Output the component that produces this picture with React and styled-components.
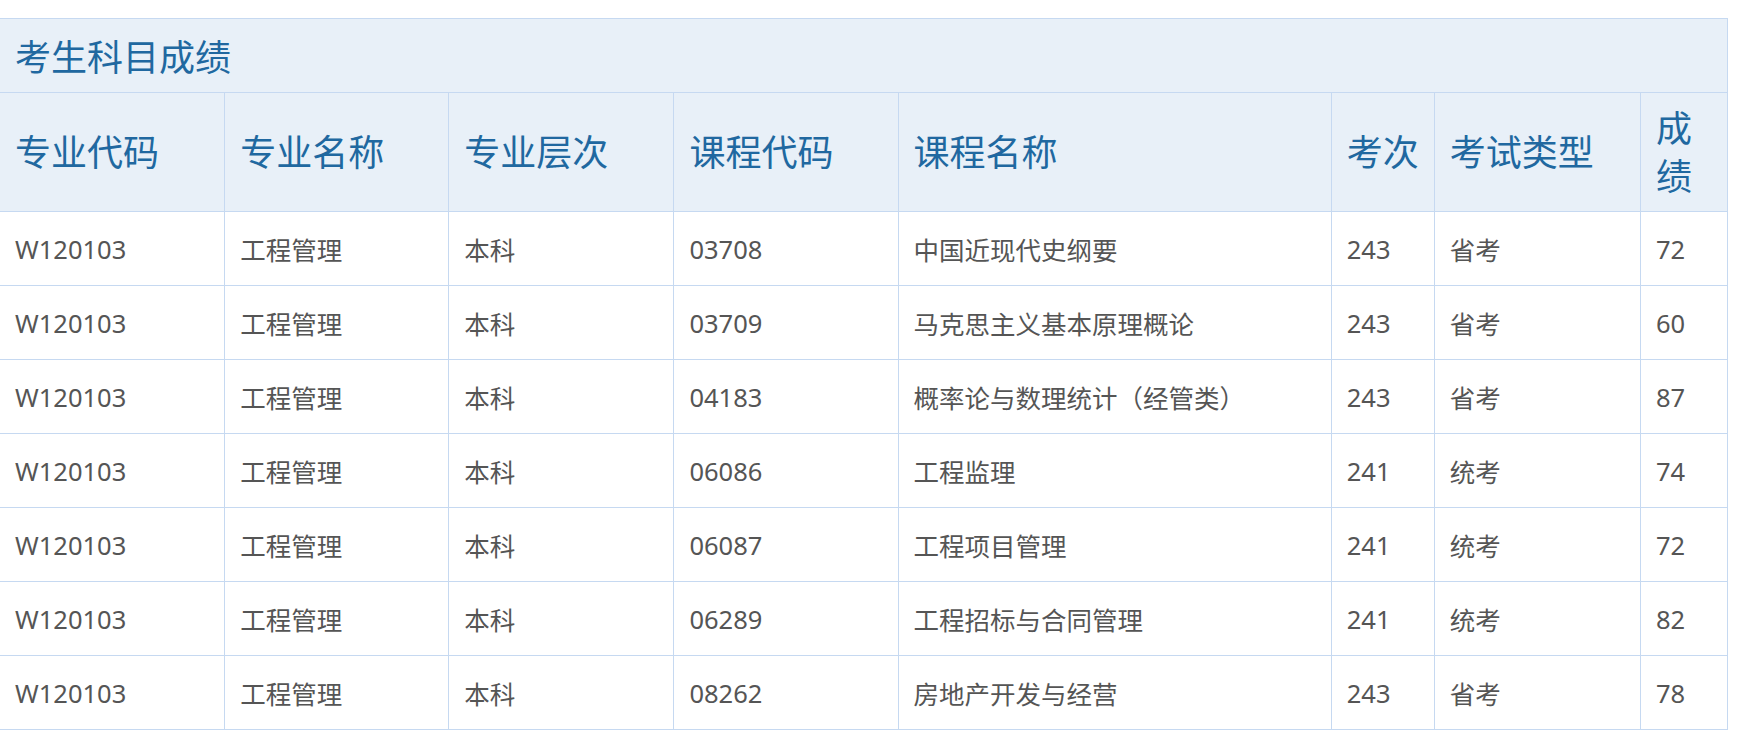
import React from 'react'
import styled, { createGlobalStyle } from 'styled-components'

const GlobalStyle = createGlobalStyle`
  html, body {
    margin: 0;
    padding: 0;
    background: #fff;
    overflow: hidden;
  }
  body {
    font-family: "Noto Sans", "Noto Sans CJK SC", sans-serif;
  }
`

const columns = [
  { title: '专业代码', width: 225 },
  { title: '专业名称', width: 224 },
  { title: '专业层次', width: 225 },
  { title: '课程代码', width: 224 },
  { title: '课程名称', width: 433 },
  { title: '考次', width: 103 },
  { title: '考试类型', width: 206 },
  { title: '成绩', width: 87 },
]

const rows = [
  ['W120103', '工程管理', '本科', '03708', '中国近现代史纲要', '243', '省考', '72'],
  ['W120103', '工程管理', '本科', '03709', '马克思主义基本原理概论', '243', '省考', '60'],
  ['W120103', '工程管理', '本科', '04183', '概率论与数理统计（经管类）', '243', '省考', '87'],
  ['W120103', '工程管理', '本科', '06086', '工程监理', '241', '统考', '74'],
  ['W120103', '工程管理', '本科', '06087', '工程项目管理', '241', '统考', '72'],
  ['W120103', '工程管理', '本科', '06289', '工程招标与合同管理', '241', '统考', '82'],
  ['W120103', '工程管理', '本科', '08262', '房地产开发与经营', '243', '省考', '78'],
]

const App = () => {
  return (
    <Page>
      <GlobalStyle />
      <ScoreTable>
        <colgroup>
          {columns.map((c) => (
            <col key={c.title} style={{ width: c.width }} />
          ))}
        </colgroup>
        <thead>
          <tr>
            <Caption colSpan={columns.length}>考生科目成绩</Caption>
          </tr>
          <tr>
            {columns.map((c) => (
              <HeadCell key={c.title}>{c.title}</HeadCell>
            ))}
          </tr>
        </thead>
        <tbody>
          {rows.map((r, i) => (
            <tr key={i}>
              {r.map((v, j) => (
                <Cell key={j}>{v}</Cell>
              ))}
            </tr>
          ))}
        </tbody>
      </ScoreTable>
    </Page>
  )
}

const Page = styled.div`
  padding-top: 18px;
  margin-left: -1px;
`

const ScoreTable = styled.table`
  border-collapse: collapse;
  table-layout: fixed;
  width: 1729px;
`

const Caption = styled.th`
  height: 73px;
  padding: 0 15px;
  text-align: left;
  font-weight: normal;
  font-size: 36px;
  color: #2068a0;
  background: #e8f0f8;
  border: 1px solid #c6d9f1;
  vertical-align: middle;
`

const HeadCell = styled.th`
  height: 95px;
  padding: 12px 15px 10px;
  text-align: left;
  font-weight: normal;
  font-size: 36px;
  line-height: 48px;
  color: #2068a0;
  background: #e8f0f8;
  border: 1px solid #c6d9f1;
  vertical-align: middle;
`

const Cell = styled.td`
  height: 73px;
  padding: 0 15px;
  font-size: 25.5px;
  color: #555;
  border: 1px solid #c6d9f1;
  vertical-align: middle;
  white-space: nowrap;
`

export default App
